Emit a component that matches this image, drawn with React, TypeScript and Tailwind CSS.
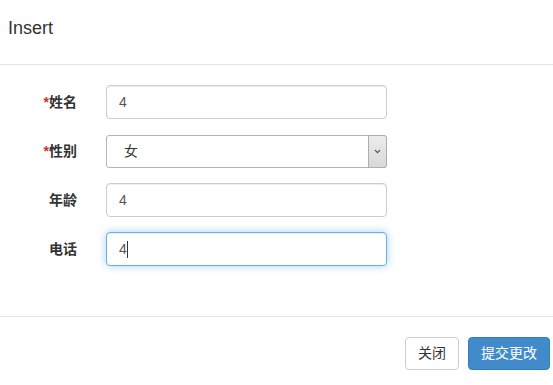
import { ChevronDown } from 'lucide-react';

const font = { fontFamily: '"Liberation Sans", Arial, "Noto Sans CJK SC", sans-serif' };

function Label({ text, required }: { text: string; required?: boolean }) {
  return (
    <label className="w-[78px] shrink-0 pr-px text-right text-[14px] font-bold text-[#333]">
      {required && <span className="text-[#c9302c]">*</span>}
      {text}
    </label>
  );
}

const baseInput =
  'h-[34px] w-[281px] rounded-[4px] border bg-white px-[12px] text-[14px] text-[#555] outline-none';
const inputCls = `${baseInput} border-[#ccc] shadow-[inset_0_1px_1px_rgba(0,0,0,0.075)]`;
const focusCls = `${baseInput} border-[#66afe9] shadow-[inset_0_1px_1px_rgba(0,0,0,0.075),0_0_8px_rgba(102,175,233,0.6)]`;

export default function App() {
  return (
    <div className="min-h-[385px] w-[553px] bg-white" style={font}>
      {/* header */}
      <div className="h-[65px] border-b border-[#e5e5e5] pt-[15px] pl-[8px]">
        <h4 className="text-[18px] leading-[26px] text-[#333]">Insert</h4>
      </div>

      {/* body */}
      <div className="flex flex-col gap-[15px] pt-[20px] pb-[50px]">
        <div className="flex items-center gap-[28px]">
          <Label text="姓名" required />
          <input className={inputCls} defaultValue="4" readOnly />
        </div>

        <div className="mt-px flex items-center gap-[28px]">
          <Label text="性别" required />
          <div className="relative h-[33px] w-[281px]">
            <select
              className="h-full w-full appearance-none rounded-[3px] border border-[#b5b5b5] bg-white pl-[17px] text-[14px] text-[#333] outline-none"
              defaultValue="女"
            >
              <option>女</option>
              <option>男</option>
            </select>
            <div className="pointer-events-none absolute top-0 right-0 flex h-full w-[19px] items-center justify-center rounded-r-[3px] border border-[#adadad] bg-gradient-to-b from-[#ececec] to-[#d9d9d9]">
              <ChevronDown className="h-[9px] w-[9px] text-[#444]" strokeWidth={3} />
            </div>
          </div>
        </div>

        <div className="flex items-center gap-[28px]">
          <Label text="年龄" />
          <input className={inputCls} defaultValue="4" readOnly />
        </div>

        <div className="flex items-center gap-[28px]">
          <Label text="电话" />
          <div className="relative">
            <input className={focusCls} defaultValue="4" readOnly />
            <span className="absolute top-[9px] left-[21px] h-[17px] w-px bg-[#333]" />
          </div>
        </div>
      </div>

      {/* footer */}
      <div className="flex justify-end gap-[9px] border-t border-[#e5e5e5] pt-[20px] pr-[3px]">
        <button className="h-[33px] rounded-[4px] border border-[#ccc] bg-white px-[12px] text-[14px] text-[#333]">
          关闭
        </button>
        <button className="h-[33px] rounded-[4px] border border-[#357ebd] bg-[#428bca] px-[12px] text-[14px] text-white">
          提交更改
        </button>
      </div>
    </div>
  );
}
